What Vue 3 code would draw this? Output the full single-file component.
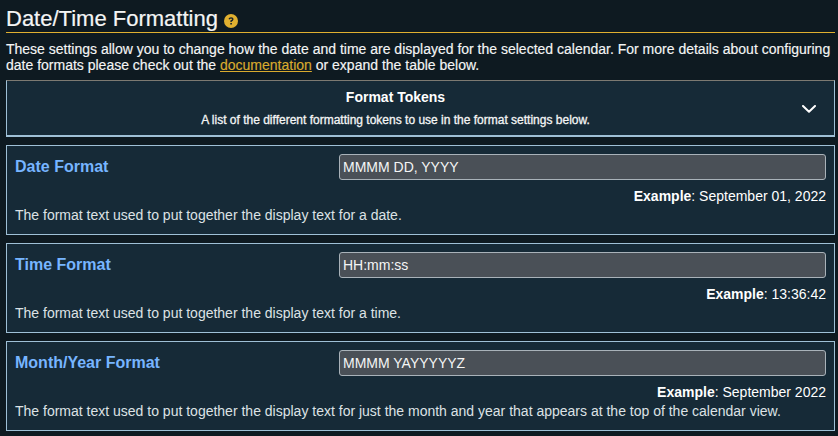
<script setup>
import { ref } from 'vue'

const settings = ref([
  {
    label: 'Date Format',
    value: 'MMMM DD, YYYY',
    example: 'September 01, 2022',
    hint: 'The format text used to put together the display text for a date.',
  },
  {
    label: 'Time Format',
    value: 'HH:mm:ss',
    example: '13:36:42',
    hint: 'The format text used to put together the display text for a time.',
  },
  {
    label: 'Month/Year Format',
    value: 'MMMM YAYYYYYZ',
    example: 'September 2022',
    hint: 'The format text used to put together the display text for just the month and year that appears at the top of the calendar view.',
  },
])
</script>

<template>
  <main class="page">
    <h1 class="title">
      <span>Date/Time Formatting</span>
      <svg class="help" viewBox="0 0 14 14">
        <circle cx="7" cy="7" r="7" fill="#e0b030" />
        <path d="M5.1 5.3 Q5.5 3.9 7 3.9 Q8.9 4 8.8 5.4 Q8.7 6.3 7.1 7 V7.9" fill="none" stroke="#18222a" stroke-width="1.4" />
        <rect x="6.3" y="9" width="1.6" height="1.5" fill="#18222a" />
      </svg>
    </h1>
    <p class="intro">
      These settings allow you to change how the date and time are displayed for the selected calendar. For more details about configuring date formats please check out the <a class="link">documentation</a> or expand the table below.
    </p>
    <section class="tokens">
      <div class="tokens-text">
        <div class="tokens-title">Format Tokens</div>
        <div class="tokens-sub">A list of the different formatting tokens to use in the format settings below.</div>
      </div>
      <svg class="chevron" viewBox="0 0 14 8">
        <path d="M1 1 L7 6.8 L13 1" fill="none" stroke="#fff" stroke-width="2" stroke-linecap="round" stroke-linejoin="round" />
      </svg>
    </section>
    <section v-for="s in settings" :key="s.label" class="card">
      <div class="row">
        <label class="label">{{ s.label }}</label>
        <input v-model="s.value" class="field" type="text" spellcheck="false" />
      </div>
      <div class="example"><b>Example</b>: {{ s.example }}</div>
      <p class="hint">{{ s.hint }}</p>
    </section>
  </main>
</template>

<style>
body {
  background: #0e1a21;
}
</style>

<style scoped>
.page {
  box-sizing: border-box;
  height: 436px;
  padding: 0 3px 0 6px;
  overflow: hidden;
  background: #0e1a21;
  color: #f4f5f5;
  font-family: "Liberation Sans", Arial, sans-serif;
  font-size: 14px;
  line-height: 16px;
}
.title {
  display: flex;
  align-items: center;
  gap: 6px;
  box-sizing: border-box;
  height: 33px;
  margin: 0 0 8px;
  padding-top: 5px;
  border-bottom: 1px solid #e0b030;
  font-size: 22px;
  font-weight: 400;
  line-height: 27px;
}
.title span {
  -webkit-text-stroke: 0.2px #f4f5f5;
}
.help {
  width: 14px;
  height: 14px;
  margin-top: 4px;
}
.intro {
  margin: 0 0 7px;
  -webkit-text-stroke: 0.15px currentColor;
}
.link {
  color: #d9aa2e;
  text-decoration: underline;
}
.tokens {
  display: flex;
  align-items: center;
  box-sizing: border-box;
  height: 57px;
  margin-bottom: 8px;
  padding: 0 18px 0 8px;
  border: 1px solid #9fc0d6;
  border-top-color: #7d7a72;
  border-bottom-width: 2px;
  background: #162a37;
}
.tokens-text {
  flex: 1;
  padding: 1px 26px 0 0;
  text-align: center;
}
.tokens-title {
  margin-bottom: 7px;
  color: #fff;
  font-weight: 700;
}
.tokens-sub {
  font-size: 12px;
  -webkit-text-stroke: 0.3px #f4f5f5;
}
.chevron {
  width: 14px;
  height: 8px;
  margin-top: 2px;
}
.card {
  box-sizing: border-box;
  height: 90px;
  margin-bottom: 8px;
  padding: 8px;
  border: 1px solid #9fc0d6;
  background: #162a37;
}
.row {
  display: flex;
  justify-content: space-between;
}
.label {
  color: #77b5ff;
  font-size: 16px;
  font-weight: 700;
  line-height: 25px;
}
.field {
  box-sizing: border-box;
  width: 487px;
  height: 26px;
  padding: 1px 3px;
  border: 1px solid #a9b2b9;
  border-radius: 3px;
  outline: none;
  background: #4a5057;
  color: #f4f5f5;
  font: inherit;
}
.example {
  margin-top: 8px;
  text-align: right;
  color: #fff;
}
.hint {
  margin: 3px 0 0;
  color: #dde2e5;
}
</style>
